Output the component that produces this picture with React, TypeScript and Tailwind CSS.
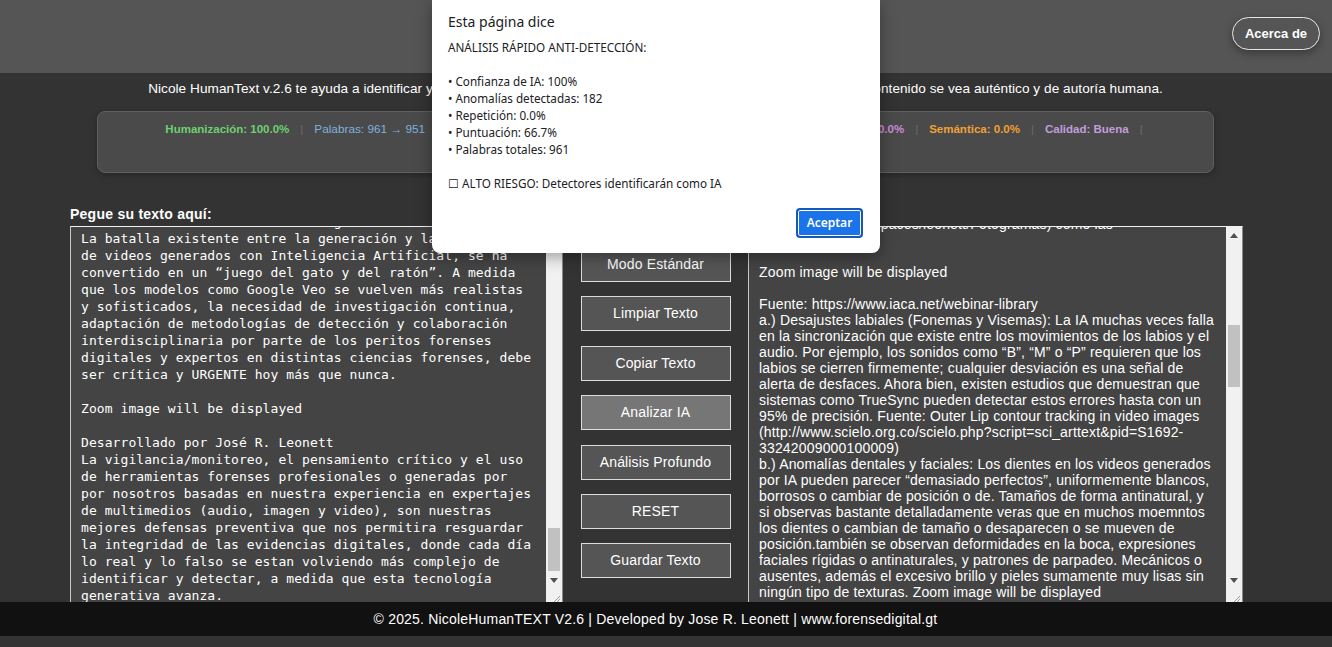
import React from "react";

const leftLines = [
  "Reto del análisis forense en la generación de contenido",
  "La batalla existente entre la generación y la detección",
  "de videos generados con Inteligencia Artificial, se ha",
  "convertido en un “juego del gato y del ratón”. A medida",
  "que los modelos como Google Veo se vuelven más realistas",
  "y sofisticados, la necesidad de investigación continua,",
  "adaptación de metodologías de detección y colaboración",
  "interdisciplinaria por parte de los peritos forenses",
  "digitales y expertos en distintas ciencias forenses, debe",
  "ser crítica y URGENTE hoy más que nunca.",
  "",
  "Zoom image will be displayed",
  "",
  "Desarrollado por José R. Leonett",
  "La vigilancia/monitoreo, el pensamiento crítico y el uso",
  "de herramientas forenses profesionales o generadas por",
  "por nosotros basadas en nuestra experiencia en expertajes",
  "de multimedios (audio, imagen y video), son nuestras",
  "mejores defensas preventiva que nos permitira resguardar",
  "la integridad de las evidencias digitales, donde cada día",
  "lo real y lo falso se estan volviendo más complejo de",
  "identificar y detectar, a medida que esta tecnología",
  "generativa avanza.",
];

const rightLines = [
  "(https://photos.co/spaces/leonett/Fotogramas) como las",
  "imágenes.",
  "",
  "Zoom image will be displayed",
  "",
  "Fuente: https://www.iaca.net/webinar-library",
  "a.) Desajustes labiales (Fonemas y Visemas): La IA muchas veces falla",
  "en la sincronización que existe entre los movimientos de los labios y el",
  "audio. Por ejemplo, los sonidos como “B”, “M” o “P” requieren que los",
  "labios se cierren firmemente; cualquier desviación es una señal de",
  "alerta de desfaces. Ahora bien, existen estudios que demuestran que",
  "sistemas como TrueSync pueden detectar estos errores hasta con un",
  "95% de precisión. Fuente: Outer Lip contour tracking in video images",
  "(http://www.scielo.org.co/scielo.php?script=sci_arttext&pid=S1692-",
  "33242009000100009)",
  "b.) Anomalías dentales y faciales: Los dientes en los videos generados",
  "por IA pueden parecer “demasiado perfectos”, uniformemente blancos,",
  "borrosos o cambiar de posición o de. Tamaños de forma antinatural, y",
  "si observas bastante detalladamente veras que en muchos moemntos",
  "los dientes o cambian de tamaño o desaparecen o se mueven de",
  "posición.también se observan deformidades en la boca, expresiones",
  "faciales rígidas o antinaturales, y patrones de parpadeo. Mecánicos o",
  "ausentes, además el excesivo brillo y pieles sumamente muy lisas sin",
  "ningún tipo de texturas. Zoom image will be displayed",
  "",
];

function Scrollbar({ thumbClass, showUp }: { thumbClass: string; showUp: boolean }) {
  return (
    <div className="w-[16px] shrink-0 bg-[#f1f1f1] flex flex-col">
      <div className="h-[16px] flex items-center justify-center">
        {showUp && (
          <svg width="8" height="5" viewBox="0 0 8 5">
            <path d="M0 5 L4 0 L8 5Z" fill="#505050" />
          </svg>
        )}
      </div>
      <div className="flex-1 px-[2px]">
        <div className={"bg-[#c1c1c1] " + thumbClass} />
      </div>
      <div className="h-[16px] flex items-center justify-center">
        <svg width="8" height="5" viewBox="0 0 8 5">
          <path d="M0 0 L4 5 L8 0Z" fill="#505050" />
        </svg>
      </div>
      <div className="h-[14px] flex items-end justify-end pr-[2px]">
        <svg width="8" height="8" viewBox="0 0 8 8">
          <path d="M8 2 L2 8 M8 5 L5 8" stroke="#9a9a9a" strokeWidth="1" />
        </svg>
      </div>
    </div>
  );
}

const Sep = () => <span className="mx-[11px] text-[#6a6a6a] font-normal">|</span>;

const buttons = [
  "Modo Estándar",
  "Limpiar Texto",
  "Copiar Texto",
  "Analizar IA",
  "Análisis Profundo",
  "RESET",
  "Guardar Texto",
];

export default function App() {
  return (
    <div className="relative h-[647px] w-[1332px] overflow-hidden bg-[#333333] font-['Liberation_Sans',Arial,sans-serif] text-white">
      {/* Header */}
      <header className="h-[73px] bg-[#555555] flex items-start">
        <div className="w-[1311px] flex justify-center pt-[20px]">
          <h1 className="text-[24px] font-bold text-white">Nicole HumanText v2.6</h1>
        </div>
        <div className="flex-1" />
        <button className="absolute right-[12px] top-[17px] h-[33px] w-[88px] rounded-full border border-[#e6e6e6] text-[13px] font-bold text-white shadow-[0_3px_8px_rgba(0,0,0,0.35)]">
          Acerca de
        </button>
      </header>

      <div className="w-[1311px]">
        <p className="mt-[8px] text-center text-[13.6px] leading-[16px] tracking-[0.05px] text-white whitespace-nowrap">
          Nicole HumanText v.2.6 te ayuda a identificar y eliminar todos los patrones de escritura artificial para conseguir que tu contenido se vea auténtico y de autoría humana.
        </p>

        <div className="mx-[97px] mt-[14px] h-[62px] rounded-[8px] border border-[#5f5f5f] bg-[#4a4a4a] pt-[9px] shadow-[0_2px_6px_rgba(0,0,0,0.25)]">
          <div className="flex justify-center pl-[8px] whitespace-nowrap text-[11.5px] leading-[16px] font-bold">
            <span className="text-[#6fcf6f]">Humanización: 100.0%</span>
            <Sep />
            <span className="text-[#7fb1dc] font-normal text-[11.8px]">Palabras: 961 → 951</span>
            <Sep />
            <span className="text-[#e0d060]">Cambios: 182</span>
            <Sep />
            <span className="text-[#60c8c8]">Variabilidad: 66.7%</span>
            <Sep />
            <span className="text-[#f08080]">Perplejidad: 45.21%</span>
            <Sep />
            <span className="text-[#c98bd6]">Repetición: 0.0%</span>
            <Sep />
            <span className="text-[#f0a134]">Semántica: 0.0%</span>
            <Sep />
            <span className="text-[#c39cdc]">Calidad: Buena</span>
            <Sep />
          </div>
        </div>

        <div className="mt-[33px] flex pl-[70px]">
          {/* Left column */}
          <div className="w-[493px] flex flex-col">
            <div className="h-[16px] text-[14px] leading-[16px] font-bold tracking-[0.25px] mb-[4px]">Pegue su texto aquí:</div>
            <div className="h-[376px] flex border-t border-l border-r border-t-[#f2f2f2] border-l-[#c8c8c8] border-r-[#8a8a8a] bg-[#444444]">
              <div className="flex-1 overflow-hidden">
                <div className="-mt-[14px] pl-[10px] font-['DejaVu_Sans_Mono',monospace] text-[13px] leading-[17px] tracking-[0.07px] text-white whitespace-pre">
                  {leftLines.map((l, i) => (
                    <div key={i} className="h-[17px]">{l}</div>
                  ))}
                </div>
              </div>
              <Scrollbar thumbClass="mt-[285px] h-[43px]" showUp={true} />
            </div>
          </div>

          {/* Middle column */}
          <div className="w-[185px] flex flex-col items-center pt-[41px] gap-[14.4px]">
            {buttons.map((b) => (
              <button
                key={b}
                className={
                  "h-[35px] w-[150px] border border-[#dcdcdc] text-[14px] tracking-[0.15px] text-white " +
                  (b === "Analizar IA" ? "bg-[#767676]" : "bg-[#555555]")
                }
              >
                {b}
              </button>
            ))}
          </div>

          {/* Right column */}
          <div className="w-[495px] flex flex-col">
            <div className="h-[16px] text-[14px] leading-[16px] font-bold mb-[4px]">Resultado:</div>
            <div className="h-[376px] flex border-t border-l border-r border-t-[#f2f2f2] border-l-[#c8c8c8] border-r-[#8a8a8a] bg-[#444444]">
              <div className="flex-1 overflow-hidden">
                <div className="-mt-[11px] pl-[10px] text-[14px] leading-[16px] tracking-[0.17px] text-white whitespace-pre">
                  {rightLines.map((l, i) => (
                    <div key={i} className="h-[16px]">{l}</div>
                  ))}
                </div>
              </div>
              <Scrollbar thumbClass="mt-[82px] h-[62px]" showUp={true} />
            </div>
          </div>
        </div>
      </div>

      <footer className="h-[34px] bg-[#111111] flex items-center">
        <div className="w-[1311px] text-center text-[14px] tracking-[0.19px] text-white">
          © 2025. NicoleHumanTEXT V2.6 | Developed by Jose R. Leonett | www.forensedigital.gt
        </div>
      </footer>

      {/* Browser alert dialog overlay */}
      <div className="absolute left-[432px] top-0 h-[253px] w-[448px] rounded-b-[8px] bg-white px-[16px] shadow-[0_4px_16px_rgba(0,0,0,0.35)] font-['Noto_Sans','Open_Sans',sans-serif] text-[#202124] flex flex-col">
        <div className="pt-[12px] text-[14px] leading-[20px]">Esta página dice</div>
        <div className="mt-[7px] text-[11.7px] leading-[17px] whitespace-pre">
          {[
            "ANÁLISIS RÁPIDO ANTI-DETECCIÓN:",
            "",
            "• Confianza de IA: 100%",
            "• Anomalías detectadas: 182",
            "• Repetición: 0.0%",
            "• Puntuación: 66.7%",
            "• Palabras totales: 961",
            "",
            "☐ ALTO RIESGO: Detectores identificarán como IA",
          ].map((l, i) => (
            <div key={i} className="h-[17px]">{l}</div>
          ))}
        </div>
        <div className="flex justify-end pt-[16px] pr-[1px]">
          <button className="h-[30px] w-[67px] rounded-[4px] border-2 border-[#1558b8] bg-[#1a73e8] text-[12px] font-semibold text-white shadow-[inset_0_0_0_1px_#ffffff]">
            Aceptar
          </button>
        </div>
      </div>
    </div>
  );
}
